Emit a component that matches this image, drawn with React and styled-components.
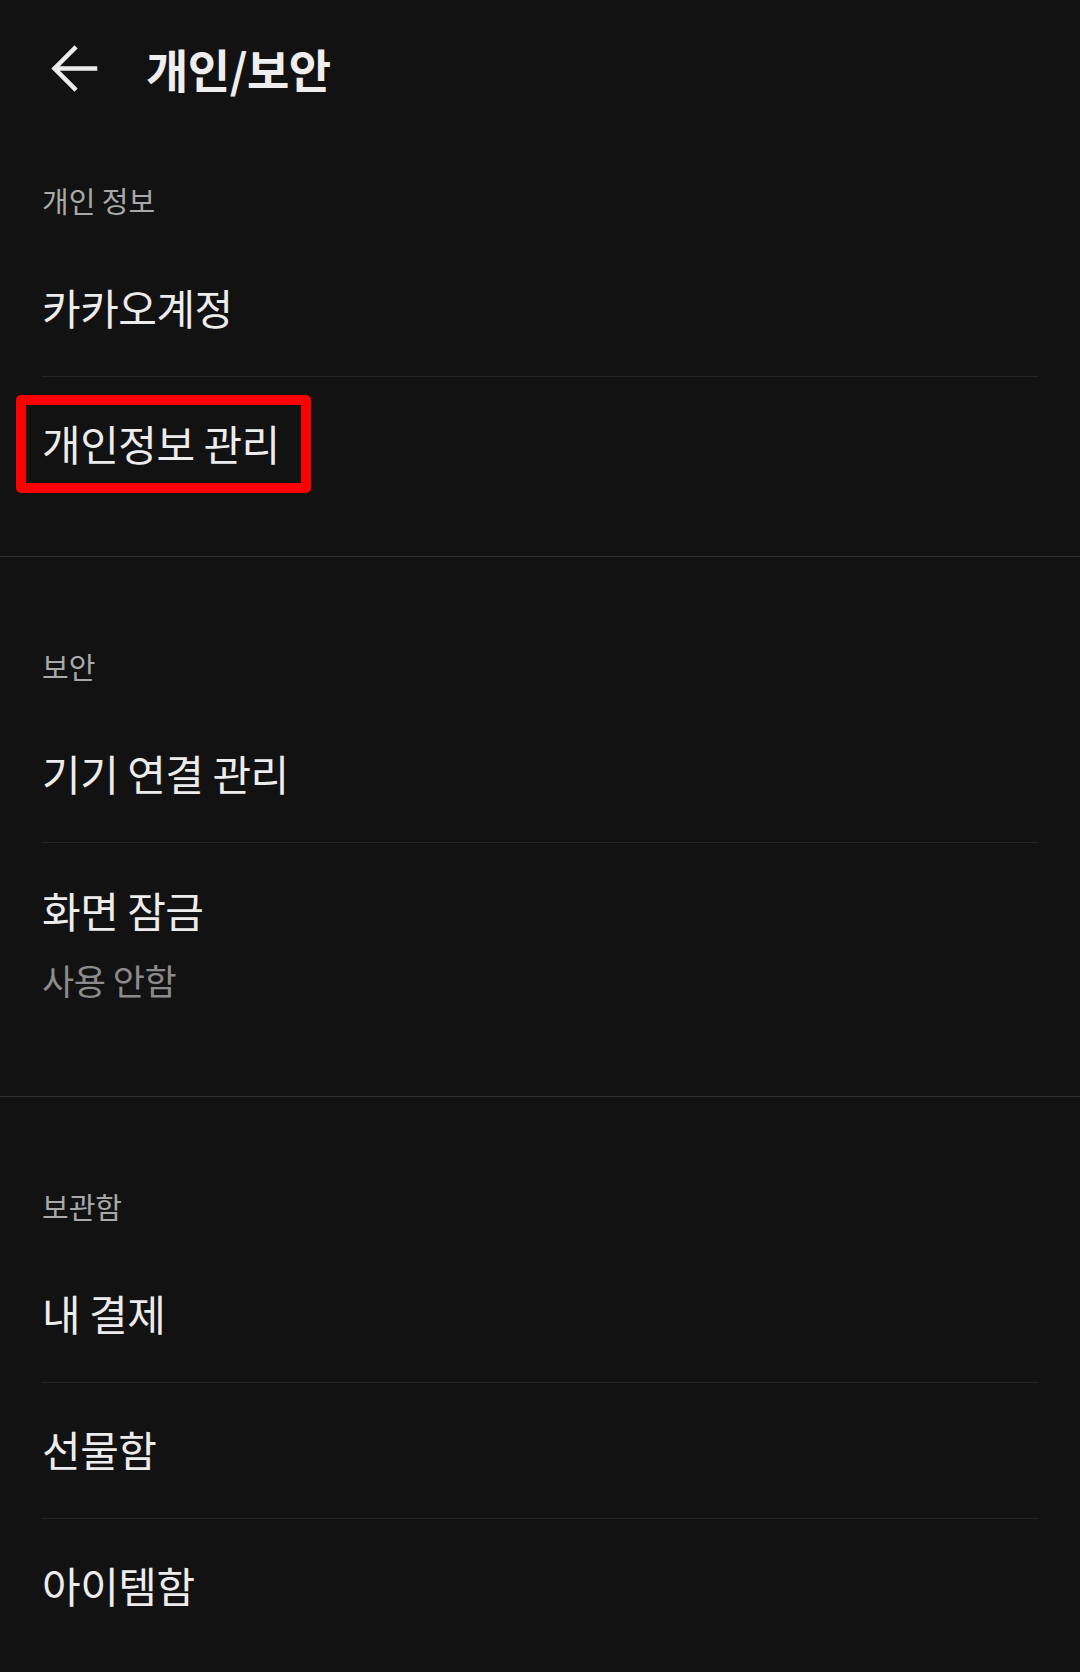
import styled, { createGlobalStyle } from "styled-components";

const GlobalStyle = createGlobalStyle`
  html, body {
    margin: 0;
    padding: 0;
    background: #121212;
  }
  body {
    font-family: "Noto Sans CJK KR", "Noto Sans", sans-serif;
    color: #ececec;
  }
`;

const Page = styled.div`
  width: 1080px;
  min-height: 1672px;
  background: #121212;
`;

const Header = styled.header`
  display: flex;
  align-items: center;
  height: 136px;
  padding-bottom: 4px;
  padding-left: 50px;
  gap: 48px;
`;

const BackButton = styled.button`
  display: flex;
  width: 48px;
  height: 48px;
  padding: 0;
  border: none;
  background: none;
  color: #ececec;
`;

const Title = styled.h1`
  margin: 0;
  font-size: 46px;
  font-weight: 700;
  line-height: 56px;
  letter-spacing: -0.5px;
  color: #eeeeee;
`;

const Section = styled.section`
  padding-top: ${({ $first }) => ($first ? "20px" : "69px")};
  padding-bottom: 44px;
  border-bottom: ${({ $last }) => ($last ? "none" : "1px solid #2f2f2f")};
`;

const SectionLabel = styled.div`
  display: flex;
  align-items: center;
  height: 79px;
  padding: 0 42px 2px;
  font-size: 29px;
  color: #a9a9a9;
`;

const Item = styled.div`
  display: flex;
  flex-direction: column;
  margin: 0 42px;
  padding: ${({ $withSub }) => ($withSub ? "39px 0 50px" : "38px 0 41px")};

  & + & {
    border-top: 1px solid #262626;
  }
`;

const ItemTitle = styled.span`
  position: relative;
  align-self: flex-start;
  font-size: 42px;
  line-height: 56px;
  letter-spacing: -0.5px;
  color: #ececec;
`;

const Highlight = styled.span`
  position: absolute;
  left: -26px;
  right: -31px;
  top: -20px;
  bottom: -22px;
  border: 10px solid #ff0000;
  border-radius: 5px;
  pointer-events: none;
`;

const ItemSub = styled.span`
  margin-top: 20px;
  font-size: 35px;
  line-height: 44px;
  letter-spacing: -0.5px;
  color: #8b8b8b;
`;

function ArrowBack() {
  return (
    <svg width="48" height="48" viewBox="0 0 48 48" fill="none">
      <path
        d="M45 24.5H6M24.5 4.5L4.5 24.5L24.5 44.5"
        stroke="currentColor"
        strokeWidth="4.5"
        strokeLinecap="square"
        strokeLinejoin="miter"
      />
    </svg>
  );
}

const sections = [
  {
    label: "개인 정보",
    items: [{ title: "카카오계정" }, { title: "개인정보 관리", marked: true }],
  },
  {
    label: "보안",
    items: [{ title: "기기 연결 관리" }, { title: "화면 잠금", sub: "사용 안함" }],
  },
  {
    label: "보관함",
    items: [{ title: "내 결제" }, { title: "선물함" }, { title: "아이템함" }],
  },
];

export default function App() {
  return (
    <Page>
      <GlobalStyle />
      <Header>
        <BackButton aria-label="뒤로">
          <ArrowBack />
        </BackButton>
        <Title>개인/보안</Title>
      </Header>
      {sections.map((section, i) => (
        <Section
          key={section.label}
          $first={i === 0}
          $last={i === sections.length - 1}
        >
          <SectionLabel>{section.label}</SectionLabel>
          {section.items.map((item) => (
            <Item key={item.title} $withSub={!!item.sub}>
              <ItemTitle>
                {item.title}
                {item.marked && <Highlight />}
              </ItemTitle>
              {item.sub && <ItemSub>{item.sub}</ItemSub>}
            </Item>
          ))}
        </Section>
      ))}
    </Page>
  );
}
